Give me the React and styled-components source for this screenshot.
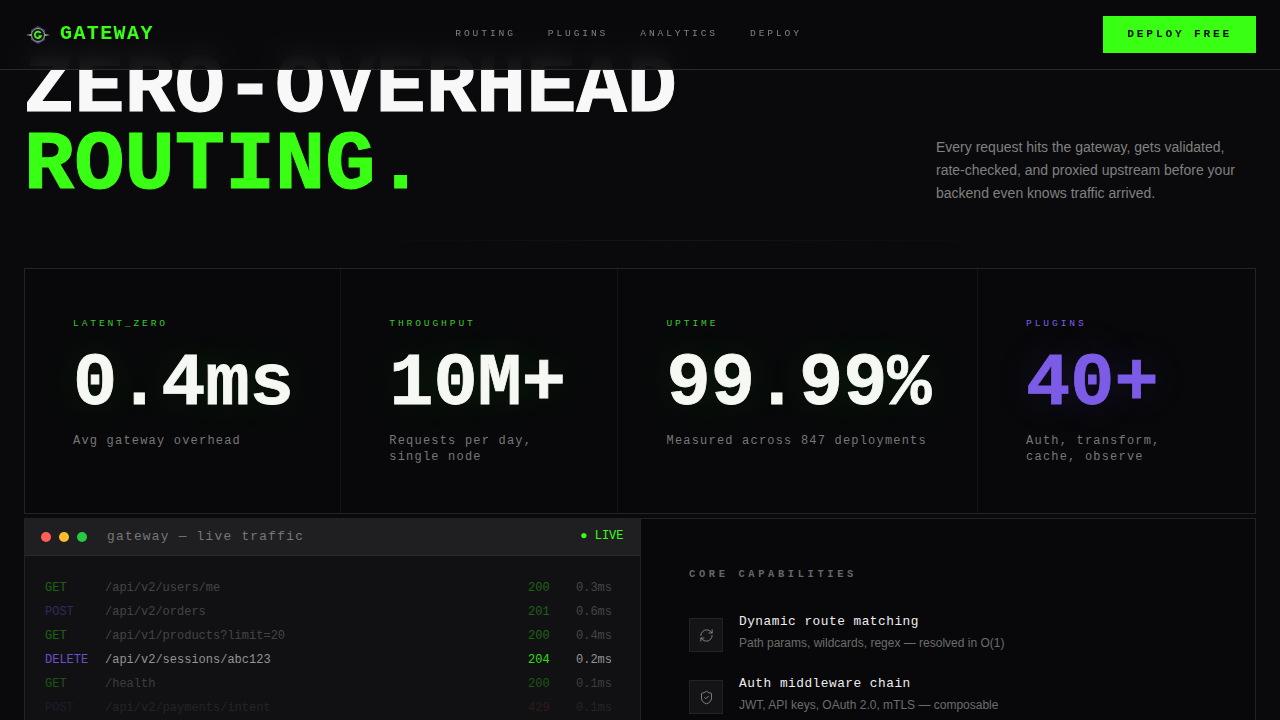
import React from 'react';
import styled, { createGlobalStyle } from 'styled-components';
import { RefreshCw, ShieldCheck } from 'lucide-react';

const Global = createGlobalStyle`
  html, body { margin: 0; padding: 0; background: #0a0a0c; overflow: hidden; }
  * { box-sizing: border-box; }
`;
const MONO = `"Liberation Mono", monospace`;
const SANS = `"Liberation Sans", Arial, sans-serif`;

const Page = styled.div`
  position: relative;
  height: 720px;
  overflow: hidden;
  background: #0a0a0c;
  font-family: ${MONO};
`;
const Nav = styled.header`
  position: absolute;
  inset: 0 0 auto 0;
  z-index: 5;
  height: 70px;
  display: flex;
  justify-content: space-between;
  align-items: center;
  padding: 0 24px;
  background: rgba(10, 10, 12, 0.92);
  backdrop-filter: blur(12px);
  border-bottom: 1px solid #2a2a2d;
`;
const Brand = styled.div`
  display: flex;
  align-items: center;
  gap: 10px;
  margin-top: -2px;
  padding-left: 2px;
  color: #39ff14;
  font-size: 20px;
  font-weight: 700;
  letter-spacing: 1.4px;
  svg { margin-top: 2px; }
`;
const NavLinks = styled.nav`
  display: flex;
  gap: 32px;
  margin-top: -3px;
`;
const NavLink = styled.a`
  font-size: 9.6px;
  letter-spacing: 0.3em;
  color: #808080;
`;
const DeployButton = styled.button`
  padding: 12px 24px;
  height: 37px;
  border: 0;
  background: #39ff14;
  color: #0a0a0c;
  font-family: ${MONO};
  font-size: 11.2px;
  line-height: 13px;
  font-weight: 700;
  letter-spacing: 0.25em;
`;
const Hero = styled.section`
  display: grid;
  grid-template-columns: 1fr 320px;
  align-items: end;
  height: 241px;
  margin: 0 24px;
  padding-top: 40px;
  padding-bottom: 36px;
  position: relative;
  &::after {
    content: '';
    position: absolute;
    left: 320px;
    right: 240px;
    bottom: 0;
    height: 1px;
    background: linear-gradient(90deg, transparent, rgba(57, 255, 20, 0.07), transparent);
  }
`;
const Headline = styled.h1`
  margin: 0 0 1px;
  font-size: 83.7px;
  line-height: 77px;
  font-weight: 700;
  color: #f8f8f8;
  white-space: nowrap;
  -webkit-text-stroke: 1px currentColor;
`;
const Accent = styled.span`
  display: block;
  color: #39ff14;
`;
const Lead = styled.p`
  margin: 0;
  font-family: ${SANS};
  font-size: 14px;
  line-height: 23px;
  color: #808080;
`;
const Stats = styled.section`
  margin: 27px 24px 0;
  height: 246px;
  display: grid;
  grid-template-columns: 316.3px 277.2px 359.6px 1fr;
  border: 1px solid #242427;
  background: #08080a;
`;
const Stat = styled.div`
  padding: 49px 48px 48px;
  border-right: 1px solid #151518;
  &:last-child { border-right: 0; }
`;
const StatLabel = styled.div`
  font-size: 9.6px;
  line-height: 12px;
  letter-spacing: 0.3em;
  color: ${p => (p.$purple ? '#7c5ce7' : '#39c82a')};
`;
const StatValue = styled.div`
  margin-top: 15px;
  font-size: 73.6px;
  line-height: 80px;
  font-weight: 700;
  color: ${p => (p.$purple ? '#7c5ce7' : '#f6f8f4')};
  -webkit-text-stroke: 0.8px currentColor;
  text-shadow: 0 0 40px ${p => (p.$purple ? 'rgba(124,92,231,.18)' : 'rgba(57,255,20,.12)')};
  white-space: nowrap;
`;
const StatDesc = styled.div`
  margin-top: 8px;
  font-size: 12px;
  line-height: 16px;
  letter-spacing: 0.1em;
  color: #777;
`;
const Lower = styled.section`
  margin: 4px 24px 0;
  display: grid;
  grid-template-columns: 616px 1fr;
  height: 300px;
`;
const Terminal = styled.div`
  background: #111113;
  border: 1px solid #222225;
  border-right: 0;
`;
const TermBar = styled.div`
  height: 37px;
  display: flex;
  align-items: center;
  gap: 8px;
  padding: 0 16px 2px;
  background: #1f1f22;
  border-bottom: 1px solid #2a2a2d;
`;
const Dot = styled.i`
  width: 10px;
  height: 10px;
  border-radius: 50%;
  background: ${p => p.$c};
  margin-top: 2px;
`;
const TermTitle = styled.span`
  margin-left: 12px;
  font-size: 12.8px;
  letter-spacing: 0.1em;
  color: #777;
`;
const Live = styled.span`
  margin-left: auto;
  margin-right: 0.5px;
  font-size: 12px;
  color: #39ff14;
`;
const TermBody = styled.div`
  padding: 20px 20px;
`;
const Row = styled.div`
  display: grid;
  grid-template-columns: 60px 1fr 48px 44px;
  height: 24px;
  align-items: center;
  font-size: 12px;
  color: #aaa;
  opacity: ${p => p.$o};
`;
const Method = styled.span`
  color: ${p => (p.$m === 'GET' ? '#39ff14' : '#7c5ce7')};
`;
const Code = styled.span`
  color: ${p => (p.$err ? '#ff5f57' : '#39ff14')};
`;
const Caps = styled.div`
  background: #08080a;
  border: 1px solid #222225;
  padding: 49px 48px 48px;
`;
const CapsTitle = styled.div`
  font-size: 10.4px;
  line-height: 12px;
  font-weight: 700;
  letter-spacing: 0.35em;
  color: #666;
  margin-bottom: 34px;
`;
const Cap = styled.div`
  display: flex;
  gap: 16px;
  margin-bottom: 24px;
`;
const CapIcon = styled.div`
  width: 34px;
  height: 34px;
  flex: none;
  margin-top: 4px;
  display: flex;
  align-items: center;
  justify-content: center;
  background: #141416;
  border: 1px solid #232326;
  color: #888;
`;
const CapTitle = styled.div`
  font-size: 12.8px;
  line-height: 15px;
  letter-spacing: 0.5px;
  color: #eee;
`;
const CapDesc = styled.div`
  margin-top: 7px;
  font-family: ${SANS};
  font-size: 12px;
  line-height: 15px;
  color: #6c6c6c;
`;

const Logo = () => (
  <svg width="24" height="24" viewBox="0 0 24 24" aria-hidden="true">
    <polygon points="12,3 19,7 19,17 12,21 5,17 5,7" fill="#4f3e86" />
    <path d="M0 12 L7 10.8 L7 13.2 Z M24 12 L17 10.8 L17 13.2 Z" fill="#a9c896" />
    <circle cx="12" cy="12" r="6.5" fill="#16161a" stroke="#8fa07e" strokeWidth="1" />
    <path d="M14.6 10 A3.2 3.2 0 1 0 15 13 L12.4 13" fill="none" stroke="#39ff14" strokeWidth="1.7" />
  </svg>
);

const rows = [
  ['GET', '/api/v2/users/me', '200', '0.3ms', 0.33],
  ['POST', '/api/v2/orders', '201', '0.6ms', 0.33],
  ['GET', '/api/v1/products?limit=20', '200', '0.4ms', 0.33],
  ['DELETE', '/api/v2/sessions/abc123', '204', '0.2ms', 0.85],
  ['GET', '/health', '200', '0.1ms', 0.28],
  ['POST', '/api/v2/payments/intent', '429', '0.1ms', 0.12],
];
const stats = [
  ['LATENT_ZERO', '0.4ms', ['Avg gateway overhead']],
  ['THROUGHPUT', '10M+', ['Requests per day,', 'single node']],
  ['UPTIME', '99.99%', ['Measured across 847 deployments']],
  ['PLUGINS', '40+', ['Auth, transform,', 'cache, observe'], true],
];
const caps = [
  [RefreshCw, 'Dynamic route matching', 'Path params, wildcards, regex — resolved in O(1)'],
  [ShieldCheck, 'Auth middleware chain', 'JWT, API keys, OAuth 2.0, mTLS — composable'],
];

export default function App() {
  return (
    <Page>
      <Global />
      <Nav>
        <Brand><Logo />GATEWAY</Brand>
        <NavLinks>
          {['ROUTING', 'PLUGINS', 'ANALYTICS', 'DEPLOY'].map(t => <NavLink key={t}>{t}</NavLink>)}
        </NavLinks>
        <DeployButton>DEPLOY FREE</DeployButton>
      </Nav>
      <Hero>
        <Headline>ZERO-OVERHEAD<Accent>ROUTING.</Accent></Headline>
        <Lead>Every request hits the gateway, gets validated, rate-checked, and proxied upstream before your backend even knows traffic arrived.</Lead>
      </Hero>
      <Stats>
        {stats.map(([l, v, d, p]) => (
          <Stat key={l}>
            <StatLabel $purple={p}>{l}</StatLabel>
            <StatValue $purple={p}>{v}</StatValue>
            <StatDesc>{d.map(x => <div key={x}>{x}</div>)}</StatDesc>
          </Stat>
        ))}
      </Stats>
      <Lower>
        <Terminal>
          <TermBar>
            <Dot $c="#ff5f57" /><Dot $c="#febc2e" /><Dot $c="#28c840" />
            <TermTitle>gateway — live traffic</TermTitle>
            <Live>● LIVE</Live>
          </TermBar>
          <TermBody>
            {rows.map(([m, path, code, t, o]) => (
              <Row key={path} $o={o}>
                <Method $m={m}>{m}</Method>
                <span>{path}</span>
                <Code $err={code === '429'}>{code}</Code>
                <span>{t}</span>
              </Row>
            ))}
          </TermBody>
        </Terminal>
        <Caps>
          <CapsTitle>CORE CAPABILITIES</CapsTitle>
          {caps.map(([I, t, d]) => (
            <Cap key={t}>
              <CapIcon><I size={15} strokeWidth={1.5} /></CapIcon>
              <div>
                <CapTitle>{t}</CapTitle>
                <CapDesc>{d}</CapDesc>
              </div>
            </Cap>
          ))}
        </Caps>
      </Lower>
    </Page>
  );
}
